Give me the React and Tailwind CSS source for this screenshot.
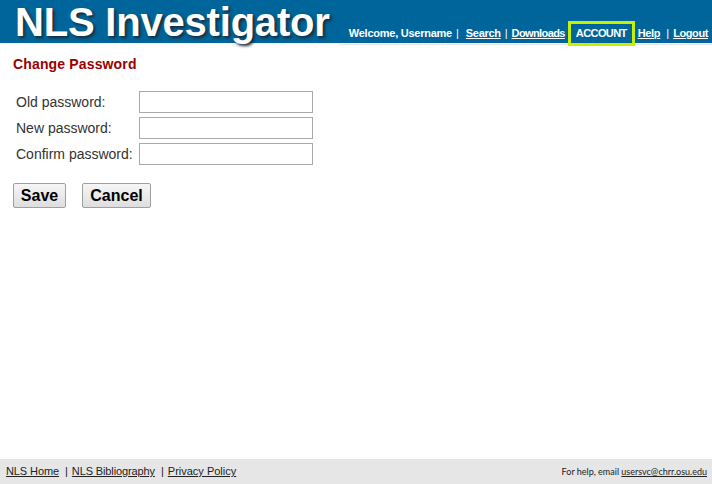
export default function App() {
  const fields = ['Old password:', 'New password:', 'Confirm password:'];

  return (
    <div className="w-[712px] h-[484px] bg-white flex flex-col font-['Liberation_Sans',Arial,sans-serif] overflow-hidden">
      {/* header */}
      <div className="relative h-[43px] bg-[#00659a] flex justify-between pl-[15px] pr-[4px] shrink-0">
        <div className="self-start mt-[2px] text-white font-bold text-[40px] leading-[40px] tracking-[-0.2px] [text-shadow:2px_2px_3px_#1a2a38]">
          NLS Investigator
        </div>
        <div className="self-end flex items-center text-white text-[11px] h-[25px] mb-[-3px]">
          <span className="font-bold tracking-[-0.25px]">Welcome, Username</span>
          <span className="ml-[4px] mr-[4px] font-normal">|</span>
          <a className="underline font-bold tracking-[-0.3px] ml-[3px]">Search</a>
          <span className="mx-[4px] font-normal">|</span>
          <a className="underline font-bold tracking-[-0.6px]">Downloads</a>
          <span className="ml-[3px] mr-[3px] h-[25px] px-[5px] border-[3px] border-[#c6f000] flex items-center font-bold tracking-[-0.6px]">
            ACCOUNT
          </span>
          <a className="underline font-bold tracking-[-0.3px]">Help</a>
          <span className="ml-[6px] mr-[4px] font-normal">|</span>
          <a className="underline font-bold tracking-[-0.4px]">Logout</a>
        </div>
      </div>
      <div className="h-px mt-[1px] ml-[338px] bg-[#e4e4e4] shrink-0" />

      {/* content */}
      <div className="flex-1 px-[13px] pt-[11px]">
        <h1 className="text-[#990000] font-bold text-[14px] leading-[16px] tracking-[0.15px]">Change Password</h1>
        <div className="mt-[19px] flex flex-col gap-[4px] pl-[3px]">
          {fields.map((f) => (
            <div key={f} className="flex items-center h-[22px]">
              <label className="w-[123px] text-[14px] text-[#333]">{f}</label>
              <input
                type="password"
                className="w-[174px] h-[22px] border border-[#a9a9a9] bg-white outline-none"
              />
            </div>
          ))}
        </div>
        <div className="mt-[18px] flex gap-[16px]">
          <button className="h-[25px] w-[53px] border border-[#a0a0a0] rounded-[2px] bg-gradient-to-b from-[#f6f6f6] to-[#dedede] font-bold text-[16px] text-black leading-none">
            Save
          </button>
          <button className="h-[25px] w-[69px] border border-[#a0a0a0] rounded-[2px] bg-gradient-to-b from-[#f6f6f6] to-[#dedede] font-bold text-[16px] text-black leading-none">
            Cancel
          </button>
        </div>
      </div>

      {/* footer */}
      <div className="h-[25px] bg-[#e6e6e6] flex items-center justify-between pl-[6px] pr-[5px] shrink-0 text-[#222]">
        <div className="flex items-center text-[11px]">
          <a className="underline tracking-[-0.1px]">NLS Home</a>
          <span className="ml-[6px] mr-[4px]">|</span>
          <a className="underline tracking-[-0.12px]">NLS Bibliography</a>
          <span className="ml-[6px] mr-[4px]">|</span>
          <a className="underline">Privacy Policy</a>
        </div>
        <div className="text-[9px] font-['Lato',sans-serif]">
          For help, email <a className="underline">usersvc@chrr.osu.edu</a>
        </div>
      </div>
    </div>
  );
}
